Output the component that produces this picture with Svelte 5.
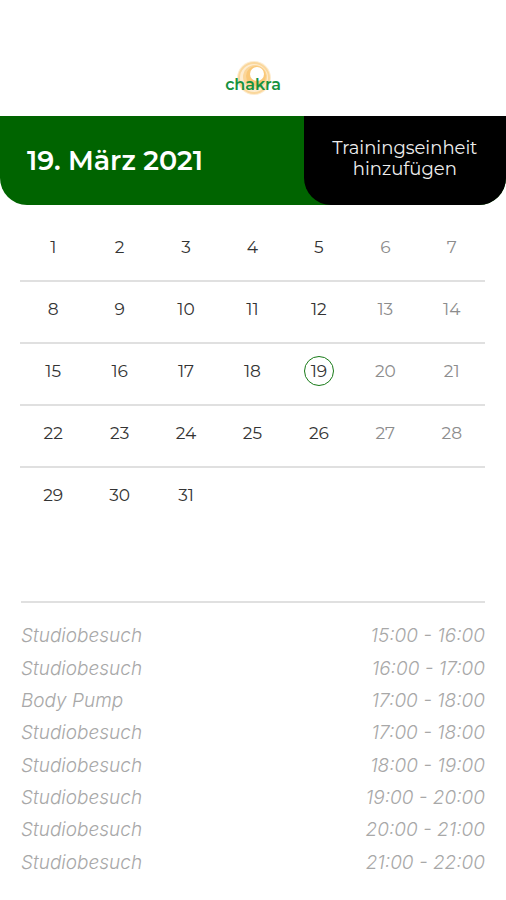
<script lang="ts">
let selected = $state(19);

const weeks = [0, 1, 2, 3, 4].map((w) => [1, 2, 3, 4, 5, 6, 7].map((d) => w * 7 + d));
const sessions = [
{ name: 'Studiobesuch', time: '15:00 - 16:00' },
{ name: 'Studiobesuch', time: '16:00 - 17:00' },
{ name: 'Body Pump', time: '17:00 - 18:00' },
{ name: 'Studiobesuch', time: '17:00 - 18:00' },
{ name: 'Studiobesuch', time: '18:00 - 19:00' },
{ name: 'Studiobesuch', time: '19:00 - 20:00' },
{ name: 'Studiobesuch', time: '20:00 - 21:00' },
{ name: 'Studiobesuch', time: '21:00 - 22:00' }
];
</script>

<main class="page">
<header class="top">
<svg class="logo" viewBox="0 0 64 40" role="img" aria-label="chakra">
<circle cx="33" cy="20" r="17" fill="#fdecd0" />
<circle cx="33" cy="20" r="15" fill="none" stroke="#fad79c" stroke-width="2" />
<circle cx="34" cy="19" r="12" fill="#fbd69a" />
<circle cx="35" cy="18" r="10" fill="#fac878" />
<circle cx="36" cy="16" r="7" fill="#fff" />
<text x="32" y="32" text-anchor="middle">chakra</text>
</svg>
</header>

<div class="bar">
<h1>{selected}. März 2021</h1>
<button class="add">Trainingseinheit hinzufügen</button>
</div>

<table class="cal">
<tbody>
{#each weeks as week}
<tr>
{#each week as d, i}
<td>
{#if d <= 31}
<button class="day" class:off={i > 4} class:act={selected === d} onclick={() => selected = d}>{d}</button>
{/if}
</td>
{/each}
</tr>
{/each}
</tbody>
</table>

<ul class="list">
{#each sessions as s}
<li><span>{s.name}</span><span>{s.time}</span></li>
{/each}
</ul>
</main>

<style>
:global(body){margin:0;background:#fff}
.page{display:flex;flex-direction:column;min-height:100vh;box-sizing:border-box;padding-bottom:21px;font-family:Montserrat,Inter,sans-serif;color:#333}
.top{display:flex;justify-content:center;padding:58px 0 18px}
.logo{display:block;width:64px;height:40px}
.logo text{font:600 16px Montserrat,sans-serif;fill:#16923f}
.bar{display:flex;background:#006400;border-radius:0 0 27px 27px;overflow:hidden}
.bar h1{flex:3;margin:0;padding-left:27px;font-size:27px;font-weight:600;line-height:89px;color:#fff}
.add{flex:0 0 40%;border:0;border-radius:0 0 0 27px;background:#000;color:#eee;font:400 18px/21px Montserrat,Inter,sans-serif;padding:0 24px 4px;cursor:pointer}
.cal{margin:15px 21px 0 20px;border-collapse:collapse;table-layout:fixed}
.cal tr{border-bottom:2px solid #e0e0e0}
.cal tr:last-child{border-bottom:0}
.cal td{width:14%;height:30px;padding:12px 0 18px;text-align:center}
.day{display:block;box-sizing:border-box;width:30px;height:30px;margin:0 auto;padding:0;border:1px solid transparent;border-radius:50%;background:none;color:#333;font:400 17px/28px Montserrat,Inter,sans-serif;cursor:pointer}
.day.off{color:#8c8c8c}
.day.act{border-color:#187a18}
.list{flex:1;display:grid;grid-auto-rows:1fr;margin:73px 21px 0;padding:17px 0 0;border-top:2px solid #e0e0e0;list-style:none;font:italic 300 19px/24px Inter,sans-serif;color:#a8a8a8}
.list li{display:flex;justify-content:space-between;align-items:center}
</style>
